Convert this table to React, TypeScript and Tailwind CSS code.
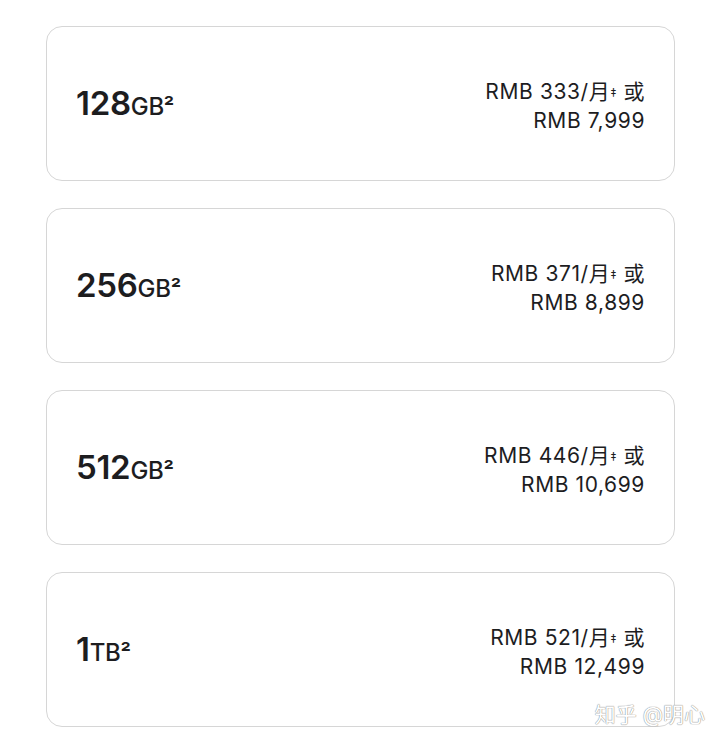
import React from "react"

const options = [
  { size: "128", unit: "GB", monthly: "333", total: "7,999" },
  { size: "256", unit: "GB", monthly: "371", total: "8,899" },
  { size: "512", unit: "GB", monthly: "446", total: "10,699" },
  { size: "1", unit: "TB", monthly: "521", total: "12,499" },
]

export default function App() {
  return (
    <div
      className="relative min-h-[749px] w-[720px] bg-white pt-[26px] pl-[46px] pr-[45px] text-[#1d1d1f]"
      style={{ fontFamily: 'Inter, "Noto Sans CJK SC", sans-serif' }}
    >
      <div className="flex flex-col gap-[27px]">
        {options.map((o) => (
          <div
            key={o.size}
            className="flex h-[155px] items-center justify-between rounded-[16px] border border-[#d6d6d6] pl-[29px] pr-[29px]"
          >
            <div className="flex items-baseline tracking-[-0.3px]">
              <span className="text-[33px] font-semibold leading-none">{o.size}</span>
              <span className="text-[24px] font-medium leading-none">{o.unit}</span>
              <span className="text-[23px] font-semibold leading-none">²</span>
            </div>
            <div className="mt-[5px] text-right text-[21px] leading-[29px] tracking-[0.6px]">
              <div>
                RMB {o.monthly}/月<sup className="relative -top-[2px] text-[12px]">‡</sup> 或
              </div>
              <div>RMB {o.total}</div>
            </div>
          </div>
        ))}
      </div>
      <div
        className="absolute right-[15px] bottom-[19px] text-[21px] text-white"
        style={{ textShadow: "0 0 1px #8a8a8a, 0 0 1px #8a8a8a" }}
      >
        知乎 @明心
      </div>
    </div>
  )
}
